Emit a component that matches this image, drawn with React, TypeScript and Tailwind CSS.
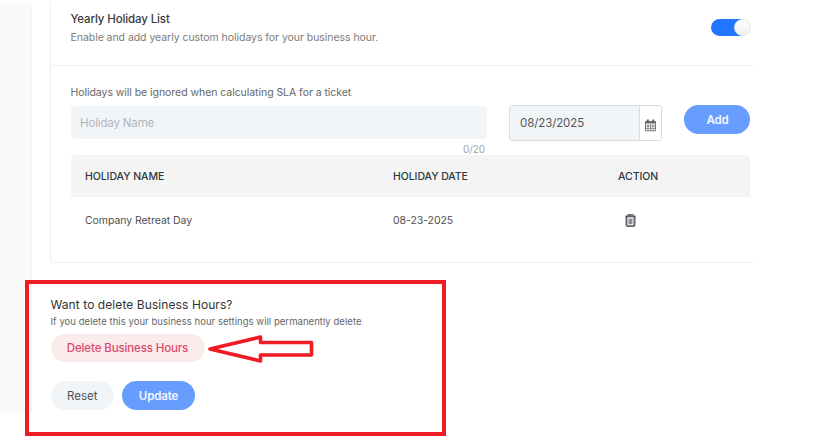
import { useState } from "react";

type Holiday = {
  name: string;
  date: string;
};

const holidays: Holiday[] = [
  { name: "Company Retreat Day", date: "08-23-2025" },
];

function CalendarIcon() {
  return (
    <svg width="11" height="13" viewBox="0 0 11 13" fill="none">
      <path d="M0.5 2.5h10v9.3H0.5z" stroke="#777" strokeWidth="1" />
      <path d="M0.2 2h10.6v2.6H0.2z" fill="#707070" />
      <path d="M2.8 0.6v2.6M8.2 0.6v2.6" stroke="#5a5a5a" strokeWidth="1.8" />
      <path d="M3 4.6v7M5.5 4.6v7M8 4.6v7M0.5 7h10M0.5 9.4h10" stroke="#858585" strokeWidth="0.9" />
    </svg>
  );
}

function TrashIcon() {
  return (
    <svg width="11" height="13" viewBox="0 0 11 13" fill="none">
      <path d="M3 1.2V0.7h5v0.5z" stroke="#5f6267" strokeWidth="1.2" />
      <path d="M0.3 2.4h10.4" stroke="#5f6267" strokeWidth="1.7" />
      <path d="M1.5 2.8v8q0 1.3 1.3 1.3h5.4q1.3 0 1.3-1.3V2.8" stroke="#5f6267" strokeWidth="1.9" />
      <path d="M4.1 4.6v5.6M5.5 4.6v5.6M6.9 4.6v5.6" stroke="#74777b" strokeWidth="1.1" />
    </svg>
  );
}

function Toggle() {
  const [on, setOn] = useState(true);

  return (
    <button
      onClick={() => setOn(!on)}
      className={
        on
          ? "flex h-[17px] w-[40px] justify-end rounded-full bg-linear-to-r from-[#2176ff] from-75% to-[#e8ebf8] to-75%"
          : "flex h-[17px] w-[40px] justify-start rounded-full bg-gray-300"
      }
    >
      <span className="size-[17px] rounded-full border border-[#e8ebf8] bg-linear-to-b from-white to-[#f0f0f0]" />
    </button>
  );
}

function HolidayCard() {
  return (
    <div className="h-[260px] rounded-bl-[4px] border-b border-l border-[#e9eff6]">

      {/* HEADER */}
      <div className="flex h-[63px] justify-between border-b border-[#eceff7] pr-[3px] pl-[19.5px]">

        <div>
          <h3 className="mt-2 text-[11.5px] leading-4 font-medium tracking-[-0.13px] text-[#3a3a3a]">
            Yearly Holiday List
          </h3>
          <p className="mt-[3px] text-[10.5px] leading-4 tracking-[-0.05px] text-[#7c7c7c]">
            Enable and add yearly custom holidays for your business hour.
          </p>
        </div>

        <div className="pt-4">
          <Toggle />
        </div>

      </div>

      {/* FORM */}
      <div className="pr-1 pl-5">

        <p className="-ml-[0.5px] pt-[19px] text-[10.5px] leading-4 tracking-[-0.05px] text-[#666]">
          Holidays will be ignored when calculating SLA for a ticket
        </p>

        <div className="flex h-[54px] items-start pt-1">

          <div className="w-[416px] pt-px">
            <div className="flex h-[33px] items-center rounded-[4px] bg-[#f1f5f8] px-[9px] pt-[2px] text-[11.5px] tracking-[-0.15px] text-[#b2b5b8]">
              Holiday Name
            </div>
            <div className="mt-[3px] pr-[2px] text-right text-[10px] leading-[14px] tracking-[-0.1px] text-[#9ba5b5]">
              0/20
            </div>
          </div>

          <div className="ml-[22px] flex h-[36px] w-[153px] overflow-hidden rounded-[3px] border border-[#dcdcdc]">
            <div className="flex flex-1 items-center bg-[#f1f5f8] pt-px pl-[10px] text-[11.5px] tracking-[-0.1px] text-[#555]">
              08/23/2025
            </div>
            <div className="flex w-[22px] items-center justify-center border-l border-[#dcdcdc] bg-white pt-[4px]">
              <CalendarIcon />
            </div>
          </div>

          <button className="ml-[22px] h-[29px] w-[66px] rounded-full bg-[#669dff] pt-[3px] pr-0 pl-px text-[11.5px] font-semibold tracking-[-0.1px] text-[#f3f7ff]">
            Add
          </button>

        </div>

        {/* TABLE */}
        <table className="w-full table-fixed border-collapse text-left text-[10.5px] tracking-[-0.06px]">

          <thead>
            <tr className="h-[42px] text-[#2f3740]">
              <th className="w-[308px] rounded-tl-[4px] bg-[#f4f4f4] pt-0.5 pl-[14px] font-medium">
                HOLIDAY NAME
              </th>
              <th className="w-[225px] bg-[#f4f4f4] pt-0.5 pl-[14px] font-medium">
                HOLIDAY DATE
              </th>
              <th className="rounded-tr-[4px] bg-[#f4f4f4] pt-0.5 pl-[14px] font-medium">
                ACTION
              </th>
            </tr>
          </thead>

          <tbody>
            {holidays.map((row) => (
              <tr key={row.name} className="h-[46px] text-[#505050]">
                <td className="pt-0.5 pl-[14px]">{row.name}</td>
                <td className="pt-0.5 pl-[14px]">{row.date}</td>
                <td className="pt-px pl-[21px]">
                  <TrashIcon />
                </td>
              </tr>
            ))}
          </tbody>

        </table>

      </div>

    </div>
  );
}

export default function App() {
  return (
    <div className="relative flex h-[442px] w-[816px] overflow-hidden bg-white pt-[3px] font-['Inter',sans-serif]">

      <aside className="h-[410px] w-[32px] border-r border-[#f3f3f4] bg-[#fafafa]" />

      <main className="ml-[18px] w-[704px]">

        <HolidayCard />

        {/* DELETE */}
        <section className="pt-[34px] pl-[0.5px]">
          <h3 className="text-[12px] leading-4 tracking-[0.08px] text-[#333]">
            Want to delete Business Hours?
          </h3>
          <p className="mt-[2px] text-[9.5px] leading-[14px] tracking-[0.05px] text-[#666]">
            If you delete this your business hour settings will permanently delete
          </p>
          <button className="mt-[4.5px] block h-[28.5px] w-[154px] rounded-full bg-[#fbecec] pt-px text-[11.5px] font-medium tracking-[-0.13px] text-[#db4a6b]">
            Delete Business Hours
          </button>
        </section>

        <div className="mt-[19px] flex gap-2 pl-[0.5px]">
          <button className="h-[29px] w-[63.5px] rounded-full bg-[#f1f5f8] pt-[3px] text-[11.5px] text-[#505050]">
            Reset
          </button>
          <button className="h-[29px] w-[73px] rounded-full bg-[#669dff] pt-[3px] text-[11.5px] font-semibold tracking-[-0.15px] text-[#f3f7ff]">
            Update
          </button>
        </div>

      </main>

      {/* highlight frame and arrow */}
      <div className="pointer-events-none absolute top-[280px] left-[25px] h-[156px] w-[421px] border-4 border-[#ef1c25]" />
      <svg
        className="pointer-events-none absolute top-[333px] left-[206px]"
        width="110"
        height="32"
        viewBox="0 0 110 32"
        fill="none"
      >
        <path
          d="M4 16 L54.5 4 V9.5 H105.5 V22 H54.5 V28 Z"
          stroke="#ef1c25"
          strokeWidth="3.6"
          strokeLinejoin="round"
        />
      </svg>

    </div>
  );
}
